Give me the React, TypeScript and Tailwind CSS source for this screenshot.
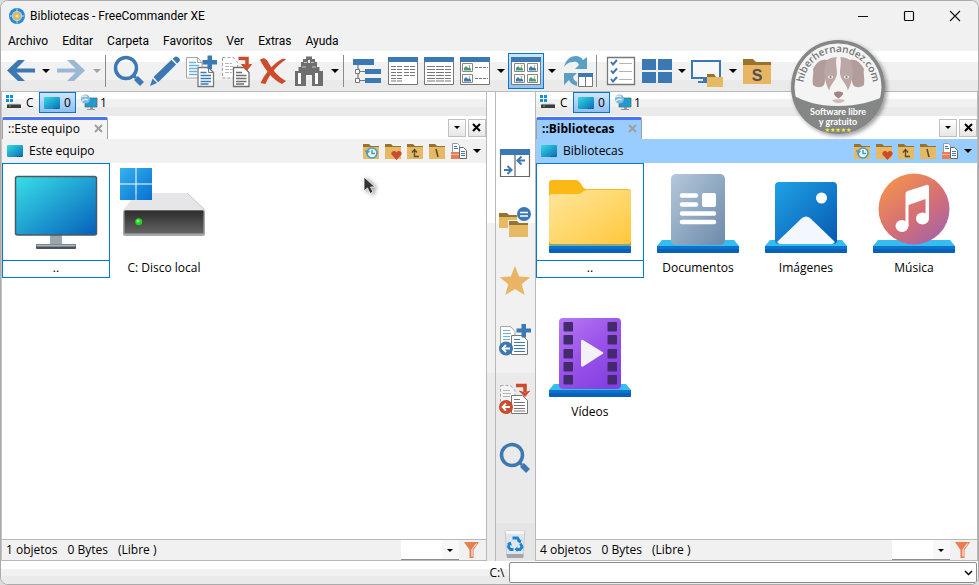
import type { ReactNode } from 'react';
import clsx from 'clsx';

type IconProps = { className?: string };

function Svg({ size, children, className }: { size: number; children: ReactNode; className?: string }) {
  return (
    <svg width={size} height={size} viewBox={`0 0 ${size} ${size}`} fill="none" aria-hidden="true" className={clsx('shrink-0', className)}>
      {children}
    </svg>
  );
}

function Caret({ className = 'text-black' }: IconProps) {
  return (
    <svg width="8" height="4" viewBox="0 0 8 4" aria-hidden="true" className={className}>
      <path d="M0 0h8L4 4z" fill="currentColor" />
    </svg>
  );
}

/* ---------- Toolbar icons (36px) ---------- */

const BackIcon = () => (
  <Svg size={36}><path d="M5 17.5 16 7h7l-8.5 8.5H33v4H14.500L23 28h-7z" fill="#3c78b4" /></Svg>
);

const ForwardIcon = () => (
  <Svg size={36}><path d="M32 17.500 21 7h-7l8.500 8.500H4v4h18.500L14 28h7z" fill="#9ab7d3" /></Svg>
);

const SearchIcon = () => (
  <Svg size={36}>
    <circle cx="15" cy="15" r="10.500" stroke="#3c78b4" strokeWidth="3.500" />
    <path d="M23 23l2 2" stroke="#3c78b4" strokeWidth="3" />
    <path d="M25 25l6 6" stroke="#3c78b4" strokeWidth="5.500" />
  </Svg>
);

const PencilIcon = () => (
  <Svg size={36}>
    <path d="M6.500 24 24.500 6.800l4.600 4.600L11.200 29.300z" fill="#3c78b4" />
    <path d="M25.600 5.800 28.500 3.500c2.500 0 4.500 2 4.500 4.200l-2.800 2.700z" fill="#3c78b4" />
    <path d="M5.600 25.500 10 30l-7 3z" fill="#3c78b4" />
  </Svg>
);

const CopyIcon = () => (
  <Svg size={36}>
    <path d="M3.500 4.500h11l4.500 5v15.500H3.500z" fill="#fff" stroke="#a5a5a5" />
    <path d="M14.500 4.500v5H19" stroke="#a5a5a5" />
    <path d="M6 9.500h7M6 12.500h10M6 15.500h8M6 18.500h8M6 21.500h8" stroke="#6fb0d8" strokeWidth="1.300" />
    <path d="M15 14.500h10.500l5 5V33.500H15z" fill="#fff" stroke="#777" strokeWidth="1.300" />
    <path d="M25.500 14.500v5h5" stroke="#777" />
    <path d="M17.500 19.500h6M17.500 22.500h10.500M17.500 25.500h10.500M17.500 28.500h10.500M17.500 31h8" stroke="#3c78b4" strokeWidth="1.300" />
    <path d="M24.500 2.500h4.500v4.500h5v4.500h-5v4.500h-4.500v-4.500h-5V7h5z" fill="#3c78b4" />
  </Svg>
);

const MoveIcon = () => (
  <Svg size={36}>
    <path d="M3.500 4.500h11l4 5v15.500h-15z" fill="#fff" stroke="#a0a0a0" strokeDasharray="3 2" />
    <path d="M6 10.500h7M6 13.500h8M6 16.500h8M6 19.500h7" stroke="#b4b4b4" strokeDasharray="4 1" />
    <path d="M14.500 14.500H25l5 5V33.500H14.500z" fill="#fff" stroke="#6e6e6e" strokeWidth="1.300" />
    <path d="M17 19.500h6M17 22.500h10.500M17 25.500h10.500M17 28.500h10.500M17 31h8" stroke="#6e6e6e" strokeWidth="1.300" />
    <path d="M19.500 5.500H28V13" stroke="#cd4b2d" strokeWidth="3.500" />
    <path d="M22.500 11.500h3l2.500 2 2.500-2h2L28 17z" fill="#cd4b2d" stroke="#cd4b2d" />
  </Svg>
);

const DeleteIcon = () => (
  <Svg size={36}>
    <path d="M5 7c2-2 5-3 7.500 1C17 16 22 23 31 28l-4 3C18 27 11 18 5 7z" fill="#cd4b2d" />
    <path d="M31 6.500c-1-1-2-1-4-.5C18 11 11 19 5.500 30l5 1C15 21 21 13 31 6.500z" fill="#cd4b2d" />
  </Svg>
);

const BinocularsIcon = () => (
  <Svg size={36}>
    <path d="M12 6h3V3.500h6V6h3v3h2v5h2.500v4H32v15H21V22h-6v11H4V18h3.500v-4H10V9h2z" fill="#6e6e6e" />
    <path d="M7 20h3v11H7zM24 20h3v11h-3z" fill="#fff" />
    <path d="M13 9.500h3M20 9.500h3M11 14h4M21 14h4" stroke="#c8c8c8" strokeWidth="1.200" />
    <path d="M17 7h2v3h-2z" fill="#eee" />
  </Svg>
);

const TreeIcon = () => (
  <Svg size={36}>
    <path d="M9 12v14M11 18.500h5M11 27.500h5" stroke="#777" strokeWidth="1.200" />
    <path d="M4 6h21v6H4zM16 16h16v5H16zM16 25h16v5H16z" fill="#3c78b4" />
    <path d="M6.500 16.500h4v4h-4zM6.500 25.500h4v4h-4z" fill="#fff" stroke="#777" />
  </Svg>
);

function Frame({ children }: { children: ReactNode }) {
  return (
    <Svg size={36}>
      <path d="M3.500 5h29v26.500h-29z" fill="#fff" stroke="#777" />
      <path d="M3 4h30v5H3z" fill="#3c78b4" />
      {children}
    </Svg>
  );
}

const ListIcon = () => (
  <Frame>
    <path d="M6 13.500h12M6 16.500h12M6 19.500h12M6 22.500h12M6 25.500h12M6 28h12M19 13.500h11M19 16.500h11M19 19.500h11M19 22.500h11" stroke="#777" strokeDasharray="5 1" />
  </Frame>
);

const DetailsIcon = () => (
  <Frame>
    <path d="M6 13.500h24M6 16.500h24M6 19.500h24M6 22.500h24M6 25.500h24M6 28h24" stroke="#777" strokeDasharray="8 1" />
  </Frame>
);

function Thumb({ x, y, color }: { x: number; y: number; color: string }) {
  return (
    <g transform={`translate(${x} ${y})`}>
      <path d="M.5.5h10v8H.5z" fill="#fff" stroke="#888" />
      <path d="M2 7.500V5l2-2 2 2 1.500-1L9 6v1.500z" fill={color} />
      <circle cx="7.500" cy="2.800" r=".9" fill="#d9a441" />
    </g>
  );
}

const ThumbListIcon = () => (
  <Frame>
    <Thumb x={5} y={10} color="#4a9a76" />
    <Thumb x={5} y={21} color="#3c78b4" />
    <path d="M18 14.500h13M18 25.500h13" stroke="#777" strokeDasharray="3 1" />
  </Frame>
);

const ThumbsIcon = () => (
  <Frame>
    <Thumb x={6} y={10} color="#4a9a76" />
    <Thumb x={19} y={10} color="#3c78b4" />
    <Thumb x={6} y={21} color="#3c78b4" />
    <Thumb x={19} y={21} color="#4a9a76" />
  </Frame>
);

const RefreshIcon = () => (
  <Svg size={36}>
    <path d="M5 14C7 6 12 3 17 3c3 0 5 1 7 4l4-3v12H16l4-4c-1-3-3-4-6-3-4 0-7 2-9 5z" fill="#5ba0c3" />
    <path d="M5 20h13l-4 4c1 3 2 4 4 5v4c-4-1-7-3-8-6l-5 5z" fill="#5ba0c3" />
    <path d="M19.500 21.500h14v12h-14z" fill="#fff" stroke="#777" />
    <path d="M26.500 22v11" stroke="#777" />
    <path d="M19 20h15v4H19z" fill="#3c78b4" />
  </Svg>
);

const ChecklistIcon = () => (
  <Svg size={36}>
    <path d="M5.500 4.500h27v27h-27z" fill="#fff" stroke="#777" strokeWidth="1.300" />
    <path d="M9 9l2 2.500L15 7M9 17.500l2 2.500 4-4.500M9 26l2 2.500 4-4.500" stroke="#3c78b4" strokeWidth="2" />
    <path d="M17 10.500h13M17 18.500h13M17 26.500h13" stroke="#b4b4b4" strokeWidth="1.200" />
  </Svg>
);

const TilesIcon = () => (
  <Svg size={36}><path d="M4 6h14v11H4zM20 6h14v11H20zM4 19h14v11H4zM20 19h14v11H20z" fill="#3c78b4" /></Svg>
);

const DesktopIcon = () => (
  <Svg size={36}>
    <path d="M3 8h28v17H3z" fill="#f8f8f8" stroke="#3c78b4" strokeWidth="2" />
    <path d="M14 26h5v2h-5zM9 28h9v2H9z" fill="#3c78b4" />
    <path d="M18 21h7l2 3h7v3H18z" fill="#96742d" />
    <path d="M18 24h16v10H18z" fill="#e6b964" />
  </Svg>
);

const FolderSIcon = () => (
  <Svg size={36}>
    <path d="M3 6h10l3 3h15v4H3z" fill="#96742d" />
    <path d="M3 12h28v19H3z" fill="#e9b463" />
    <text x="17" y="28" textAnchor="middle" fontFamily="Liberation Sans, sans-serif" fontWeight="700" fontSize="16" fill="#505050">S</text>
  </Svg>
);

/* ---------- Side bar icons (36px) ---------- */

const SplitIcon = () => (
  <Svg size={36}>
    <path d="M3.500 5h29v26.500h-29z" fill="#fff" stroke="#666" strokeWidth="1.200" />
    <path d="M3 4h30v6H3z" fill="#3c78b4" />
    <path d="M18 10v21" stroke="#666" strokeWidth="1.200" />
    <path d="M28 15.500h-7M24.500 11.500l-4 4 4 4M7 25h7M10.500 21l4 4-4 4" stroke="#3c78b4" strokeWidth="2" />
  </Svg>
);

const FolderSyncIcon = () => (
  <Svg size={36}>
    <path d="M2 9h8l2 2h8v3H2z" fill="#96742d" />
    <path d="M2 13h18v11H2z" fill="#e6b964" />
    <path d="M11 16h21v17H11z" fill="#f1f1f1" />
    <path d="M12 17h8l2 2h9v3H12z" fill="#96742d" />
    <path d="M12 21h19v12H12z" fill="#e6b964" />
    <circle cx="27" cy="10" r="7" fill="#3c78b4" />
    <path d="M23 8.500h8M23 12h8" stroke="#fff" strokeWidth="1.600" />
  </Svg>
);

const StarIcon = () => (
  <Svg size={36}>
    <path d="M18 3l4.200 10.500 11 .7-8.500 7 3 10.800L18 26l-9.700 6 3-10.800-8.500-7 11-.7z" fill="#e9b463" />
  </Svg>
);

const CopyLeftIcon = () => (
  <Svg size={36}>
    <path d="M3.500 4.500h10l4.500 5v15H3.500z" fill="#fff" stroke="#a5a5a5" />
    <path d="M6 8.500h7M6 11.500h8M6 14.500h7M6 17.500h7" stroke="#6fb0d8" strokeWidth="1.200" />
    <path d="M14.500 13.500h11l5 5v14h-16z" fill="#fff" stroke="#777" />
    <path d="M17 17.500h6M17 20.500h11M17 23.500h11M17 26.500h11M17 29.500h11" stroke="#3c78b4" strokeWidth="1.200" />
    <path d="M24.500 2h4.500v4.500h5v4h-5v5h-4.500v-5h-5v-4h5z" fill="#3c78b4" />
    <circle cx="9" cy="26.500" r="7" fill="#3c78b4" />
    <path d="M13 26.500H6M9 23 5.500 26.500 9 30" stroke="#fff" strokeWidth="1.800" />
  </Svg>
);

const MoveLeftIcon = () => (
  <Svg size={36}>
    <path d="M3.500 4.500h10l4.500 5v15H3.500z" fill="#f4f4f4" stroke="#a5a5a5" strokeDasharray="3 2" />
    <path d="M6 9.500h7M6 12.500h8M6 15.500h7" stroke="#b4b4b4" />
    <path d="M14.500 14.500h11l5 5v13h-16z" fill="#fff" stroke="#777" />
    <path d="M17 18.500h6M17 21.500h11M17 24.500h11M17 27.500h11M17 30h11" stroke="#777" strokeWidth="1.200" />
    <path d="M19 4.500h9V11" stroke="#cd4b2d" strokeWidth="3.500" />
    <path d="M22.500 10l5.500 2 4.500-2-4.500 5.500z" fill="#cd4b2d" stroke="#cd4b2d" />
    <circle cx="9" cy="26" r="7" fill="#cd4b2d" />
    <path d="M13 26H6M9 22.500 5.500 26 9 29.500" stroke="#fff" strokeWidth="1.800" />
  </Svg>
);

const RecycleIcon = () => (
  <Svg size={36}>
    <path d="M8 6h20l-2 26H10z" fill="#e2e5e7" stroke="#c9cccf" />
    <path d="M8.500 6h19l-1 3h-17z" fill="#f6f6f6" />
    <path d="M9.500 29h17l-.3 4H10z" fill="#a3a6a9" />
    <path d="M15.500 13h5l2 3.500M12.500 18l-1 4 2 2.500h3M23.500 18.500l1.500 3.500-2 2.500h-3.500" stroke="#1583dc" strokeWidth="2.800" />
    <path d="M24.500 14.500l-1 4-3.500-2zM20.500 21.500v5.500l-3-2.700zM10 18.500l3.500-2 1.500 4z" fill="#1583dc" />
  </Svg>
);

/* ---------- Small icons ---------- */

const ScreenIcon = ({ className }: IconProps) => (
  <svg width="16" height="12" viewBox="0 0 16 12" aria-hidden="true" className={clsx('shrink-0', className)}>
    <defs>
      <linearGradient id="screen" x1="0" y1="0" x2="1" y2="1">
        <stop offset="0" stopColor="#35dce0" />
        <stop offset=".5" stopColor="#1ea3cf" />
        <stop offset="1" stopColor="#0b6cb5" />
      </linearGradient>
    </defs>
    <rect width="16" height="12" rx="1" fill="url(#screen)" />
    <path d="M10 11.500h5" stroke="#0a4f86" strokeDasharray="1 1" />
  </svg>
);

const DriveIcon = () => (
  <Svg size={16}>
    <path d="M0 0h3v3H0zM4 0h3v3H4zM0 4h3v3H0zM4 4h3v3H4z" fill="#0f8fe0" />
    <path d="M3 8.500h10L15 10H1z" fill="#d2d2d2" />
    <path d="M1 9.500h14v3.500H1z" fill="#3c3c3c" />
    <path d="M3 11h2" stroke="#1ee01e" />
  </Svg>
);

const NetworkIcon = () => (
  <Svg size={18}>
    <path d="M5 4h12v9H5z" fill="#1e9bd0" stroke="#58636b" strokeWidth=".7" />
    <path d="M10 13h3v2h-3zM7 15h8v1H7z" fill="#8e9aa3" />
    <circle cx="5.500" cy="5" r="4.500" fill="#7eb8dd" />
    <path d="M2 3c2-2 3 0 5-1M2 7c2-1 3-3 6-1" stroke="#d7ecf5" strokeWidth="1.500" />
  </Svg>
);

function SmallFolder({ children }: { children: ReactNode }) {
  return (
    <Svg size={18}>
      <path d="M1 2h6l2 2h8v3H1z" fill="#96742d" />
      <path d="M1 5h16v12H1z" fill="#e6b964" />
      {children}
    </Svg>
  );
}

const HistoryIcon = () => (
  <SmallFolder>
    <circle cx="10" cy="11" r="5" fill="#e9f5f8" stroke="#4b9dbb" strokeWidth="1.600" />
    <path d="M10 8v3.500h3M3.500 8l1.500 3 2.500-2" stroke="#4b9dbb" strokeWidth="1.500" />
  </SmallFolder>
);

const FavoriteIcon = () => (
  <SmallFolder>
    <path d="M12.500 18 7.500 12.500c-1-3 3-5 5-2 2-3 6-1 5 2z" fill="#cd4b2d" />
  </SmallFolder>
);

const FolderUpIcon = () => (
  <SmallFolder>
    <path d="M8.500 8v6.500H13M6 10.500l2.500-3 2.500 3" stroke="#5a4a2d" strokeWidth="1.300" />
  </SmallFolder>
);

const FolderRootIcon = () => (
  <SmallFolder>
    <path d="M8 7l2 8" stroke="#5a4a2d" strokeWidth="1.500" />
  </SmallFolder>
);

const CopyPathIcon = () => (
  <Svg size={18}>
    <path d="M2.500 1.500h5l2 2v8h-7z" fill="#fff" stroke="#999" />
    <path d="M4 4.500h3M4 6.500h4" stroke="#3c78b4" />
    <path d="M9.500 5.500h4l3 3v8h-7z" fill="#fff" stroke="#666" />
    <path d="M11 9.500h4M11 11.500h4M11 13.500h4" stroke="#3c78b4" />
    <path d="M1 10h8v7H1z" fill="#e97e56" />
    <path d="M1 12.500h8" stroke="#f6b69b" />
  </Svg>
);

const FilterIcon = () => (
  <Svg size={16}>
    <path d="M0 0h15L9.500 8v8h-4V8z" fill="#e97e50" />
    <path d="M12.500 1.500 8 7.500v7" stroke="#fff" strokeWidth="1" />
  </Svg>
);

const AppIcon = () => (
  <Svg size={18}>
    <circle cx="9" cy="9" r="8" fill="#2b87cf" />
    <circle cx="9" cy="9" r="5.200" fill="#8bd3f5" />
    <path d="M9 1.500v15M1.500 9h15" stroke="#b5e3f7" strokeWidth="1" />
    <circle cx="9" cy="9" r="3.800" fill="#f5ad3d" />
    <circle cx="9" cy="9" r="1.600" fill="#ffeebb" />
  </Svg>
);

const CrossIcon = ({ className }: IconProps) => (
  <svg width="9" height="9" viewBox="0 0 9 9" aria-hidden="true" className={className}>
    <path d="M1 1l7 7M8 1L1 8" stroke="currentColor" strokeWidth="2" />
  </svg>
);

/* ---------- Large file icons (96px) ---------- */

const Shelf = () => (
  <>
    <path d="M12 76h72l5 6H7z" fill="#35bdf0" />
    <path d="M7 82h82v6c0 .6-.4 1-1 1H8c-.6 0-1-.4-1-1z" fill="#0a62b8" />
    <path d="M7 82h82v3H7z" fill="#0b74cc" />
  </>
);

const ComputerArt = () => (
  <Svg size={96}>
    <defs>
      <linearGradient id="computer" x1="0" y1="0" x2="1" y2="1">
        <stop offset="0" stopColor="#3adfe6" />
        <stop offset=".5" stopColor="#1fa0d2" />
        <stop offset="1" stopColor="#075fba" />
      </linearGradient>
    </defs>
    <path d="M42 71h12v9H42z" fill="#9aa6ab" />
    <rect x="28" y="80" width="40" height="5" rx="1" fill="#4b545b" />
    <path d="M28.500 80.500h39v2h-39z" fill="#a9b8c2" />
    <rect x="7.500" y="12.500" width="81" height="58.500" rx="2" fill="url(#computer)" stroke="#4d5961" strokeWidth="1.500" />
  </Svg>
);

const DiskArt = () => (
  <Svg size={96}>
    <defs>
      <linearGradient id="disk" x1="0" y1="0" x2="0" y2="1">
        <stop offset="0" stopColor="#2c2c2c" />
        <stop offset="1" stopColor="#646464" />
      </linearGradient>
      <linearGradient id="win" x1="0" y1="0" x2="1" y2="1">
        <stop offset="0" stopColor="#36b2ee" />
        <stop offset="1" stopColor="#0670d2" />
      </linearGradient>
    </defs>
    <path d="M21 29h50l18 17H7z" fill="#e6e6e8" />
    <path d="M71 29l18 17" stroke="#c8c8c8" />
    <rect x="7" y="46" width="82" height="26" rx="2" fill="#a8a8a8" />
    <rect x="8.500" y="46.500" width="79" height="23" rx="1" fill="url(#disk)" />
    <circle cx="22.700" cy="57.700" r="3.500" fill="#1bd61b" />
    <circle cx="22" cy="57" r="1.500" fill="#8bf58b" />
    <path d="M4 4h15.500v15.500H4zM20.500 4H36v15.500H20.500zM4 20.500h15.500V36H4zM20.500 20.500H36V36H20.500z" fill="url(#win)" />
  </Svg>
);

const FolderArt = () => (
  <Svg size={96}>
    <defs>
      <linearGradient id="folder" x1="0" y1="0" x2="1" y2="1">
        <stop offset="0" stopColor="#ffe69c" />
        <stop offset="1" stopColor="#ffc83c" />
      </linearGradient>
    </defs>
    <Shelf />
    <path d="M10 16h24c5 0 6 9 10 9h42c2 0 3 1 3 3v50H7V19c0-2 1-3 3-3z" fill="#fbb917" />
    <path d="M7 78v3h82v-3z" fill="#d9931a" />
    <path d="M7 34c0-2 1-4 4-4h25c4 0 5-4 9-4h41c2 0 3 1 3 3v48c0 2-1 3-3 3H10c-2 0-3-1-3-3z" fill="url(#folder)" />
  </Svg>
);

const DocumentsArt = () => (
  <Svg size={96}>
    <defs>
      <linearGradient id="docs" x1="0" y1="0" x2="1" y2="1">
        <stop offset="0" stopColor="#b4c8d8" />
        <stop offset="1" stopColor="#6d8aab" />
      </linearGradient>
    </defs>
    <Shelf />
    <rect x="21" y="10" width="54" height="71" rx="5" fill="url(#docs)" />
    <path d="M32 31.500h14M32 40.500h14M32 49.500h32M32 58h32" stroke="#fff" strokeWidth="4.500" strokeLinecap="round" />
    <rect x="52" y="29" width="14" height="14" rx="2" fill="#fff" />
  </Svg>
);

const PicturesArt = () => (
  <Svg size={96}>
    <defs>
      <linearGradient id="pics" x1="0" y1="0" x2="1" y2="1">
        <stop offset="0" stopColor="#1fa2e6" />
        <stop offset="1" stopColor="#0659b0" />
      </linearGradient>
    </defs>
    <Shelf />
    <rect x="17" y="18" width="62" height="62" rx="4" fill="url(#pics)" />
    <circle cx="63.500" cy="34" r="5.500" fill="#fff" />
    <path d="M19 78l25-24c2.500-2 5.500-2 8 0l25 24c-1 1-2 2-3 2H22c-1 0-2-1-3-2z" fill="#f3f8fe" />
  </Svg>
);

const MusicArt = () => (
  <Svg size={96}>
    <defs>
      <linearGradient id="music" x1=".1" y1=".1" x2=".8" y2="1">
        <stop offset="0" stopColor="#f3924f" />
        <stop offset=".55" stopColor="#d56f74" />
        <stop offset="1" stopColor="#a463a8" />
      </linearGradient>
    </defs>
    <Shelf />
    <circle cx="48" cy="45" r="35.500" fill="url(#music)" />
    <ellipse cx="36" cy="62" rx="6.500" ry="6" fill="#fff" />
    <ellipse cx="56.500" cy="54.500" rx="6.500" ry="6" fill="#fff" />
    <path d="M39.500 30c0-2 1-2.500 2-3l19-6c1.500-.5 2.500 0 2.500 2v32h-3.500V35L42.500 41v21h-3z" fill="#fff" />
  </Svg>
);

const HOLE_ROWS = [14, 27, 41, 54, 67];

const VideosArt = () => (
  <Svg size={96}>
    <defs>
      <linearGradient id="video" x1="0" y1="0" x2=".7" y2="1">
        <stop offset="0" stopColor="#b57af2" />
        <stop offset=".5" stopColor="#9c55ea" />
        <stop offset="1" stopColor="#8440e2" />
      </linearGradient>
    </defs>
    <Shelf />
    <rect x="17" y="10" width="62" height="71" rx="4" fill="url(#video)" />
    {HOLE_ROWS.map((y) => (
      <g key={y} fill="#432a6e">
        <rect x="21.500" y={y} width="9.500" height="9.500" rx="1" />
        <rect x="65.500" y={y} width="9.500" height="9.500" rx="1" />
      </g>
    ))}
    <path d="M39 33.500c0-1.500 1-2 2-1.400l19.500 12c1 .6 1 1.300 0 1.900L41 58.500c-1 .6-2 0-2-1.400z" fill="#f3f1f7" />
  </Svg>
);

/* ---------- Window chrome ---------- */

const MENUS = ['Archivo', 'Editar', 'Carpeta', 'Favoritos', 'Ver', 'Extras', 'Ayuda'];

function TitleBar() {
  return (
    <header className="flex h-[30px] items-center bg-[#f1f1f1] pl-[7px] font-['Roboto',sans-serif]">
      <AppIcon />
      <h1 className="ml-1 flex-1 text-xs">Bibliotecas - FreeCommander XE</h1>
      <button type="button" aria-label="Minimizar" className="flex h-full w-[46px] items-center justify-center">
        <Svg size={12}><path d="M1 6.500h10" stroke="#111" /></Svg>
      </button>
      <button type="button" aria-label="Maximizar" className="flex h-full w-[46px] items-center justify-center">
        <Svg size={12}><rect x="1.500" y="1.500" width="9" height="9" rx="1" stroke="#111" strokeWidth="1.200" /></Svg>
      </button>
      <button type="button" aria-label="Cerrar" className="flex h-full w-[46px] items-center justify-center">
        <Svg size={12}><path d="M1 1l10 10M11 1L1 11" stroke="#111" strokeWidth="1.100" /></Svg>
      </button>
    </header>
  );
}

function MenuBar() {
  return (
    <nav className="flex h-5 items-center gap-[14px] bg-[#f1f1f1] pl-[7px] font-['Roboto',sans-serif] text-xs">
      {MENUS.map((item) => (
        <button key={item} type="button">{item}</button>
      ))}
    </nav>
  );
}

function ToolButton({ label, active, children }: { label: string; active?: boolean; children: ReactNode }) {
  return (
    <button
      type="button"
      aria-label={label}
      className={clsx('flex size-9 shrink-0 items-center justify-center', active && 'bg-linear-to-b from-[#d3e7fa] to-[#8fc0f0] outline outline-1 -outline-offset-1 outline-[#0078d7]')}
    >
      {children}
    </button>
  );
}

function DropButton({ label, muted }: { label: string; muted?: boolean }) {
  return (
    <button type="button" aria-label={label} className="flex h-9 w-[15px] shrink-0 items-center justify-center">
      <Caret className={muted ? 'text-[#a3a3a3]' : 'text-black'} />
    </button>
  );
}

const Separator = () => <div className="mr-[5px] ml-px h-8 w-px shrink-0 bg-[#8c8c8c]" />;

function Toolbar() {
  return (
    <div className="flex h-[41px] items-center border-b border-[#b9b9b9] bg-[linear-gradient(to_bottom,#fff_0_28%,#f1f1f1_28%_72%,#eaeaea_72%)] pl-px">
      <ToolButton label="Atrás"><BackIcon /></ToolButton>
      <DropButton label="Historial atrás" />
      <ToolButton label="Adelante"><ForwardIcon /></ToolButton>
      <DropButton label="Historial adelante" muted />
      <Separator />
      <ToolButton label="Ver archivo"><SearchIcon /></ToolButton>
      <ToolButton label="Editar archivo"><PencilIcon /></ToolButton>
      <ToolButton label="Copiar"><CopyIcon /></ToolButton>
      <ToolButton label="Mover"><MoveIcon /></ToolButton>
      <ToolButton label="Eliminar"><DeleteIcon /></ToolButton>
      <ToolButton label="Buscar"><BinocularsIcon /></ToolButton>
      <DropButton label="Opciones de búsqueda" />
      <Separator />
      <ToolButton label="Árbol"><TreeIcon /></ToolButton>
      <ToolButton label="Lista"><ListIcon /></ToolButton>
      <ToolButton label="Detalles"><DetailsIcon /></ToolButton>
      <ToolButton label="Miniaturas con detalles"><ThumbListIcon /></ToolButton>
      <DropButton label="Opciones de detalles" />
      <ToolButton label="Miniaturas" active><ThumbsIcon /></ToolButton>
      <DropButton label="Opciones de miniaturas" />
      <ToolButton label="Actualizar"><RefreshIcon /></ToolButton>
      <Separator />
      <ToolButton label="Selección"><ChecklistIcon /></ToolButton>
      <ToolButton label="Sistema"><TilesIcon /></ToolButton>
      <DropButton label="Opciones del sistema" />
      <ToolButton label="Escritorio"><DesktopIcon /></ToolButton>
      <DropButton label="Carpetas del escritorio" />
      <ToolButton label="Carpeta especial"><FolderSIcon /></ToolButton>
    </div>
  );
}

/* ---------- Panels ---------- */

type FileItem = { name: string; art: ReactNode; selected?: boolean };

type PanelProps = {
  title: string;
  active?: boolean;
  status: string[];
  items: FileItem[];
  className: string;
};

function DriveBar() {
  return (
    <div className="flex h-6 shrink-0 items-start bg-[linear-gradient(to_bottom,#fff_0_30%,#f1f1f1_30%_64%,#eaeaea_64%)] text-xs">
      <button type="button" className="flex h-[21px] w-[37px] items-center gap-1 pl-1">
        <DriveIcon />C
      </button>
      <button type="button" className="flex h-[21px] w-[37px] items-center justify-center gap-1 border border-[#0078d7] bg-linear-to-b from-[#cfe4fa] to-[#8fc0f0]">
        <ScreenIcon />0
      </button>
      <button type="button" className="flex h-[21px] items-center gap-[2px] pl-1">
        <NetworkIcon />1
      </button>
    </div>
  );
}

function Panel({ title, active, status, items, className }: PanelProps) {
  return (
    <section className={clsx('flex min-w-0 flex-col border-r border-[#b9b9b9] bg-white', className)}>
      <DriveBar />
      <div className="flex h-[23px] shrink-0 items-end">
        <div
          className={clsx(
            'flex h-[22px] w-[106px] items-center justify-between rounded-t-xs border-x border-t-3 border-x-[#a0a0a0] border-t-[#4a73f5] pr-1 pb-[2px] pl-[5px] text-xs whitespace-nowrap',
            active ? 'bg-[#99ccff] font-bold' : 'bg-[#f4f4f4]',
          )}
        >
          <span>::{title}</span>
          <button type="button" aria-label={`Cerrar ${title}`}><CrossIcon className="text-[#a0a0a0]" /></button>
        </div>
        <div className="ml-auto flex gap-[2px] self-center">
          <button type="button" aria-label="Lista de pestañas" className="flex size-[18px] items-center justify-center border border-[#c0c0c0] bg-linear-to-b from-white to-[#e6e6e6]">
            <svg width="6" height="3" viewBox="0 0 6 3" aria-hidden="true"><path d="M0 0h6L3 3z" fill="#000" /></svg>
          </button>
          <button type="button" aria-label="Cerrar pestaña" className="flex size-[18px] items-center justify-center border border-[#c0c0c0] bg-linear-to-b from-white to-[#e6e6e6]">
            <CrossIcon className="text-black" />
          </button>
        </div>
      </div>

      <div className={clsx('flex h-6 shrink-0 items-center px-[5px] text-xs', active ? 'bg-[#99ccff]' : 'bg-[#f1f1f1]')}>
        <ScreenIcon />
        <span className="ml-[6px] flex-1">{title}</span>
        <div className="flex items-center gap-1">
          <button type="button" aria-label="Historial"><HistoryIcon /></button>
          <button type="button" aria-label="Favoritos"><FavoriteIcon /></button>
          <button type="button" aria-label="Subir un nivel"><FolderUpIcon /></button>
          <button type="button" aria-label="Carpeta raíz"><FolderRootIcon /></button>
          <button type="button" aria-label="Copiar ruta"><CopyPathIcon /></button>
          <button type="button" aria-label="Más opciones" className="ml-[1px]"><Caret /></button>
        </div>
      </div>

      <ul className="grid min-h-0 flex-1 auto-rows-[144px] grid-cols-[repeat(auto-fill,108px)] content-start overflow-hidden">
        {items.map(({ name, art, selected }) => (
          <li key={name} className="flex flex-col text-center text-xs">
            <div className={clsx('flex h-[98px] items-center justify-center border', selected ? 'border-[#0078d7]' : 'border-transparent')}>{art}</div>
            <span className={clsx('h-[17px] border-x border-b leading-[14px]', selected ? 'border-[#0078d7]' : 'border-transparent')}>{name}</span>
          </li>
        ))}
      </ul>

      <footer className="flex h-[22px] shrink-0 items-center border-y border-[#b9b9b9] bg-[#f1f1f1] pl-1 pr-[6px] text-xs">
        <div className="flex flex-1 gap-[10px]">
          {status.map((part) => <span key={part}>{part}</span>)}
        </div>
        <div className="relative h-5 w-[58px]">
          <select aria-label={`Filtro de ${title}`} className="h-full w-full appearance-none border-b border-[#8c8c8c] bg-linear-to-r from-white from-70% to-[#f8f8f8] to-70%">
            <option value=""></option>
          </select>
          <svg width="6" height="3" viewBox="0 0 6 3" aria-hidden="true" className="pointer-events-none absolute top-[9px] right-[6px]"><path d="M0 0h6L3 3z" fill="#000" /></svg>
        </div>
        <button type="button" aria-label="Filtrar" className="ml-[5px]"><FilterIcon /></button>
      </footer>
    </section>
  );
}

const SIDE_ACTIONS = [
  { label: 'Dividir paneles', icon: <SplitIcon /> },
  { label: 'Comparar carpetas', icon: <FolderSyncIcon /> },
  { label: 'Favoritos', icon: <StarIcon /> },
  { label: 'Copiar al otro panel', icon: <CopyLeftIcon /> },
  { label: 'Mover al otro panel', icon: <MoveLeftIcon /> },
  { label: 'Buscar', icon: <SearchIcon /> },
];

function SideBar() {
  return (
    <>
      <div className="w-2 shrink-0 bg-[linear-gradient(to_bottom,#fff_0_28%,#f1f1f1_28%_60%,#eaeaea_60%)]" />
      <aside className="flex w-[41px] shrink-0 flex-col items-center border-x border-[#b9b9b9] bg-[linear-gradient(to_bottom,#fff_0_28%,#f1f1f1_28%_60%,#eaeaea_60%_92%,#e5e5e5_92%)] pt-[41px]">
        {SIDE_ACTIONS.map(({ label, icon }) => (
          <button key={label} type="button" aria-label={label} className="flex h-[59px] w-full items-center justify-center">
            {icon}
          </button>
        ))}
        <button type="button" aria-label="Papelera" className="mt-auto"><RecycleIcon /></button>
      </aside>
    </>
  );
}

function CommandLine() {
  return (
    <div className="flex h-[23px] shrink-0 items-center bg-[linear-gradient(to_bottom,#fff_0_35%,#f1f1f1_35%_65%,#eaeaea_65%)] pr-px text-xs">
      <label htmlFor="command" className="w-[52%] pr-1 text-right">C:\</label>
      <div className="relative h-[21px] flex-1">
        <select id="command" className="h-full w-full appearance-none rounded-xs border border-[#8c8c8c] bg-white">
          <option value=""></option>
        </select>
        <svg width="9" height="6" viewBox="0 0 9 6" fill="none" aria-hidden="true" className="pointer-events-none absolute top-2 right-1">
          <path d="M1 1l3.500 3.500L8 1" stroke="#000" strokeWidth="1.500" />
        </svg>
      </div>
    </div>
  );
}

/* Site badge that floats over the toolbar */
function Badge() {
  return (
    <svg width="104" height="104" viewBox="0 0 104 104" aria-hidden="true" className="pointer-events-none absolute top-[34px] right-[88px]">
      <defs>
        <clipPath id="badge-inner"><circle cx="52" cy="52" r="46" /></clipPath>
        <path id="badge-arc" d="M17.500 58A35 35 0 1 1 86.500 58" />
        <filter id="badge-shadow" x="-10%" y="-10%" width="125%" height="125%">
          <feDropShadow dx="2" dy="2" stdDeviation="2" floodColor="#000" floodOpacity=".4" />
        </filter>
      </defs>
      <circle cx="52" cy="52" r="47" fill="#858787" filter="url(#badge-shadow)" />
      <circle cx="52" cy="52" r="43.500" fill="#f4f4f4" />
      <path d="M4 59c14 7 26 12 48 12s34-5 48-10v43H4z" fill="#858787" clipPath="url(#badge-inner)" />
      {/* ears */}
      <path d="M41 25c-6-1-10 2-14 9 1 4-1 9 0 16 4 3 8 3 11 0 2-5 1-10 3-15zM64 25c6-1 10 2 14 9-1 4 1 9 0 16-4 3-8 3-11 0-2-5-1-10-3-15z" fill="#b39d9b" />
      {/* face */}
      <path d="M41 25c3-2 6-3 11.500-3S61 23 64 25c3 6 3 12 2 18-1 8-4 11-6 17-2 5-13 5-15 0-2-6-5-9-6-17-1-6-1-12 2-18z" fill="#bba7a5" />
      <path d="M51 21c-2 6 0 11 0 17 0 7-8 12-8 19-1 8 3 13 9.500 13S63 65 62 57c0-7-8-12-8-19 0-6 2-11 0-17z" fill="#f6f3f3" />
      <path d="M48 58c1-2 8-2 9 0 0 3-3 4-4.500 5.500C51 62 48 61 48 58z" fill="#a08583" />
      <path d="M46 65c3-1 10-1 13 0-2 4-11 4-13 0z" fill="#cdbcbb" />
      <g fill="#fff">
        <ellipse cx="44.500" cy="42" rx="2.500" ry="1.600" />
        <ellipse cx="60.500" cy="42" rx="2.500" ry="1.600" />
      </g>
      <g fill="#8c8888">
        <circle cx="44.500" cy="42" r="1.200" />
        <circle cx="60.500" cy="42" r="1.200" />
      </g>
      <text fontFamily="Open Sans, sans-serif" fontSize="10" fontWeight="600" fill="#747474" textAnchor="middle">
        <textPath href="#badge-arc" startOffset="50%">hiberhernandez.com</textPath>
      </text>
      <g fontFamily="Lato, sans-serif" fontSize="9" fontWeight="700" fill="#fff" textAnchor="middle">
        <text x="52" y="80">Software libre</text>
        <text x="52" y="90">y gratuito</text>
      </g>
      <text x="52" y="97" fontFamily="DejaVu Sans, sans-serif" fontSize="6" fill="#f5ee3c" textAnchor="middle">★★★★★</text>
    </svg>
  );
}

function Cursor() {
  return (
    <svg width="16" height="20" viewBox="0 0 16 20" aria-hidden="true" className="pointer-events-none absolute top-[175px] left-[362px] drop-shadow-[2px_1px_2px_rgba(0,0,0,0.45)]">
      <path d="M1 1v14l3.500-3 2.500 5.500 3-1.500-2.500-5H12z" fill="#333" stroke="#fff" strokeWidth=".8" />
    </svg>
  );
}

const LEFT_ITEMS: FileItem[] = [
  { name: '..', art: <ComputerArt />, selected: true },
  { name: 'C: Disco local', art: <DiskArt /> },
];

const RIGHT_ITEMS: FileItem[] = [
  { name: '..', art: <FolderArt />, selected: true },
  { name: 'Documentos', art: <DocumentsArt /> },
  { name: 'Imágenes', art: <PicturesArt /> },
  { name: 'Música', art: <MusicArt /> },
  { name: 'Vídeos', art: <VideosArt /> },
];

export default function App() {
  return (
    <div className="h-screen bg-[#dcdcdc] font-['Open_Sans','Noto_Sans',sans-serif] text-black">
      <div className="relative flex h-full flex-col overflow-hidden rounded-lg border border-[#ababab] bg-white">
        <TitleBar />
        <MenuBar />
        <Toolbar />
        <main className="flex min-h-0 flex-1 border-l border-[#c4c4c4]">
          <Panel className="flex-[485]" title="Este equipo" status={['1 objetos', '0 Bytes', '(Libre )']} items={LEFT_ITEMS} />
          <SideBar />
          <Panel className="flex-[442]" title="Bibliotecas" active status={['4 objetos', '0 Bytes', '(Libre )']} items={RIGHT_ITEMS} />
        </main>
        <CommandLine />
        <Badge />
        <Cursor />
      </div>
    </div>
  );
}
